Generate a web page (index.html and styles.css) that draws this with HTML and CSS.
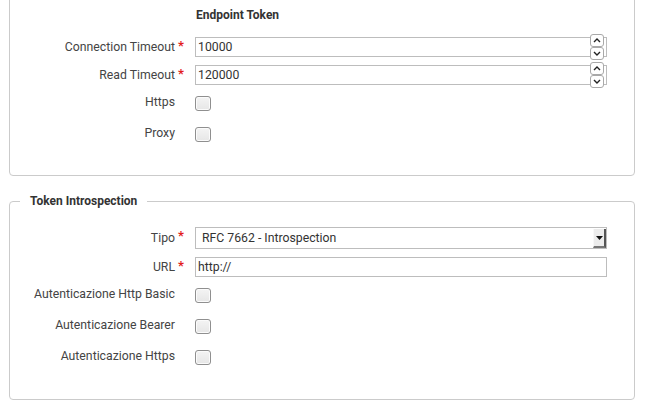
FILE: index.html
```html
<!DOCTYPE html>
<html lang="it">
<head>
<meta charset="utf-8">
<title>Token</title>
<link rel="stylesheet" href="styles.css">
</head>
<body>
<div class="panel panel-top">
  <div class="row row-head">
    <span></span><span></span><span class="head">Endpoint Token</span>
  </div>
  <div class="row row-input">
    <label class="lbl">Connection Timeout</label><span class="req">*</span>
    <div class="num">
      <input class="inp" type="text" value="10000">
      <span class="spin">
        <span class="spin-btn"><svg width="8" height="5" viewBox="0 0 8 5"><polyline points="1,4 4,1 7,4" fill="none" stroke="#222" stroke-width="1.4"/></svg></span>
        <span class="spin-btn"><svg width="8" height="5" viewBox="0 0 8 5"><polyline points="1,1 4,4 7,1" fill="none" stroke="#222" stroke-width="1.4"/></svg></span>
      </span>
    </div>
  </div>
  <div class="row row-input">
    <label class="lbl">Read Timeout</label><span class="req">*</span>
    <div class="num">
      <input class="inp" type="text" value="120000">
      <span class="spin">
        <span class="spin-btn"><svg width="8" height="5" viewBox="0 0 8 5"><polyline points="1,4 4,1 7,4" fill="none" stroke="#222" stroke-width="1.4"/></svg></span>
        <span class="spin-btn"><svg width="8" height="5" viewBox="0 0 8 5"><polyline points="1,1 4,4 7,1" fill="none" stroke="#222" stroke-width="1.4"/></svg></span>
      </span>
    </div>
  </div>
  <div class="row row-check">
    <label class="lbl">Https</label><span class="req"></span>
    <span class="cb"></span>
  </div>
  <div class="row row-check">
    <label class="lbl">Proxy</label><span class="req"></span>
    <span class="cb"></span>
  </div>
</div>

<fieldset class="panel panel-fs">
  <legend class="legend">Token Introspection</legend>
  <div class="row row-select">
    <label class="lbl">Tipo</label><span class="req">*</span>
    <div class="sel">
      <span class="sel-text">RFC 7662 - Introspection</span>
      <span class="sel-btn"><svg width="7" height="4" viewBox="0 0 7 4"><polygon points="0,0 7,0 3.5,4" fill="#111"/></svg></span>
    </div>
  </div>
  <div class="row row-input">
    <label class="lbl">URL</label><span class="req">*</span>
    <input class="inp inp-full" type="text" value="http://">
  </div>
  <div class="row row-check">
    <label class="lbl">Autenticazione Http Basic</label><span class="req"></span>
    <span class="cb"></span>
  </div>
  <div class="row row-check">
    <label class="lbl">Autenticazione Bearer</label><span class="req"></span>
    <span class="cb"></span>
  </div>
  <div class="row row-check">
    <label class="lbl">Autenticazione Https</label><span class="req"></span>
    <span class="cb"></span>
  </div>
</fieldset>
</body>
</html>
```

FILE: styles.css
```css
html, body {
  margin: 0;
  padding: 0;
  background: #fff;
}
body {
  font-family: Roboto, "Liberation Sans", Arial, sans-serif;
  font-size: 12px;
  color: #444;
  overflow: hidden;
  height: 412px;
}

.panel {
  box-sizing: border-box;
  width: 626px;
  margin-left: 9px;
  border: 1px solid #cbcbcb;
  border-radius: 4px;
  padding-left: 10px;
}

.panel-top {
  margin-top: -20px;
  padding-top: 27px;
  padding-bottom: 33px;
}

.panel-fs {
  margin-top: 18px;
  margin-right: 0;
  min-width: 0;
  padding-top: 19px;
  padding-right: 0;
  padding-bottom: 34px;
}

.legend {
  padding: 0 10px;
  font-weight: bold;
  color: #333;
  line-height: 14px;
  font-size: 12px;
}

.row {
  display: grid;
  grid-template-columns: 155px 20px 412px;
  align-items: center;
}

.row-head { height: 14px; }
.row-input { height: 20px; }
.row-select { height: 22px; }
.row-check { height: 15px; }

.row-head + .row-input { margin-top: 15px; }
.row-input + .row-input,
.row-select + .row-input { margin-top: 8px; }
.row-input + .row-check { margin-top: 11px; }
.row-check + .row-check { margin-top: 16px; }

.head {
  font-weight: bold;
  color: #333;
  padding-left: 1px;
  line-height: 14px;
}

.lbl {
  text-align: right;
  white-space: nowrap;
  line-height: 14px;
  font-size: 12.25px;
}

.row-check .lbl {
  margin-top: -3px;
}

.req {
  color: #e21d1d;
  font-weight: bold;
  padding-left: 3px;
  font-size: 13px;
  line-height: 14px;
  align-self: start;
  padding-top: 2px;
}

.inp {
  box-sizing: border-box;
  width: 412px;
  height: 20px;
  margin: 0;
  border: 1px solid #bdbdbd;
  padding: 0 3px 0 2px;
  font-family: Roboto, "Liberation Sans", Arial, sans-serif;
  font-size: 12.25px;
  color: #333;
  background: #fff;
  outline: none;
}

.num {
  position: relative;
  width: 412px;
  height: 20px;
}

.spin {
  position: absolute;
  right: 3px;
  top: -3px;
  width: 14px;
  display: flex;
  flex-direction: column;
}

.spin-btn {
  box-sizing: border-box;
  height: 13px;
  width: 14px;
  background: #fff;
  border: 1px solid #a9a9a9;
  border-radius: 3px;
  display: flex;
  align-items: center;
  justify-content: center;
}

.sel {
  box-sizing: border-box;
  position: relative;
  width: 412px;
  height: 22px;
  border: 1px solid #bdbdbd;
  background: #fff;
  display: flex;
  align-items: center;
}

.sel-text {
  padding-left: 6px;
  color: #333;
  font-size: 12.25px;
}

.sel-btn {
  position: absolute;
  right: 0;
  top: 1px;
  bottom: 0;
  width: 13px;
  box-sizing: border-box;
  background: #ececec;
  border-left: 1px solid #f8f8f8;
  border-right: 2px solid #555;
  border-bottom: 2px solid #777;
  display: flex;
  align-items: center;
  justify-content: center;
}

.cb {
  box-sizing: border-box;
  width: 16px;
  height: 15px;
  border: 1px solid #8f8f8f;
  border-radius: 3px;
  background: linear-gradient(#f4f4f4, #e6e6e6);
  box-shadow: inset 0 0 0 1px #fbfbfb;
}
```
